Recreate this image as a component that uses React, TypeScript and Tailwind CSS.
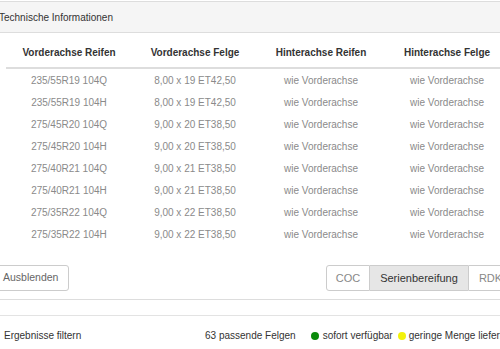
import React from 'react';

interface Row {
  reifen: string;
  felge: string;
}

const rows: Row[] = [
  { reifen: '235/55R19 104Q', felge: '8,00 x 19 ET42,50' },
  { reifen: '235/55R19 104H', felge: '8,00 x 19 ET42,50' },
  { reifen: '275/45R20 104Q', felge: '9,00 x 20 ET38,50' },
  { reifen: '275/45R20 104H', felge: '9,00 x 20 ET38,50' },
  { reifen: '275/40R21 104Q', felge: '9,00 x 21 ET38,50' },
  { reifen: '275/40R21 104H', felge: '9,00 x 21 ET38,50' },
  { reifen: '275/35R22 104Q', felge: '9,00 x 22 ET38,50' },
  { reifen: '275/35R22 104H', felge: '9,00 x 22 ET38,50' },
];

const headers = ['Vorderachse Reifen', 'Vorderachse Felge', 'Hinterachse Reifen', 'Hinterachse Felge'];

const App: React.FC = () => {
  return (
    <div
      className="w-[500px] h-[349px] overflow-hidden bg-white"
      style={{ fontFamily: '"Liberation Sans", Arial, Helvetica, sans-serif' }}
    >
      <div className="ml-[-14px] w-[545px] pt-[1px]">
        {/* Technische Informationen panel */}
        <div className="border border-[#dddddd] rounded-[3px] bg-white">
          <div className="bg-[#f5f5f5] border-b border-[#dddddd] h-[31px] px-[12px] flex items-center text-[10px] text-[#333333]">
            Technische Informationen
          </div>
          <div className="pl-[19px] pr-[20px] pb-[8px]">
            <div className="grid grid-cols-4 w-[504px] border-b-2 border-[#dddddd]">
              {headers.map(h => (
                <div
                  key={h}
                  className="text-center font-bold text-[10px] leading-[14px] text-[#333333] pt-[13px] pb-[7px]"
                >
                  {h}
                </div>
              ))}
            </div>
            <div className="w-[504px]">
              {rows.map(r => (
                <div key={r.reifen} className="grid grid-cols-4 h-[22px] items-center text-[10px] text-[#8a8a8a] text-center">
                  <div>{r.reifen}</div>
                  <div>{r.felge}</div>
                  <div>wie Vorderachse</div>
                  <div>wie Vorderachse</div>
                </div>
              ))}
            </div>
            <div className="flex items-center justify-between mt-[20px] ml-[-14px]">
              <button className="h-[26px] px-[10px] border border-[#cccccc] rounded-[3px] text-[10.5px] text-[#666666] bg-white">
                Ausblenden
              </button>
              <div className="flex mr-[-3px]">
                <button className="h-[26px] w-[44px] border border-[#cccccc] rounded-l-[3px] text-[11px] text-[#888888] bg-white">
                  COC
                </button>
                <button className="h-[26px] w-[98px] border-y border-[#cccccc] text-[11px] text-[#333333] bg-[#e6e6e6]">
                  Serienbereifung
                </button>
                <button className="h-[26px] w-[45px] border border-[#cccccc] rounded-r-[3px] text-[11px] text-[#888888] bg-white">
                  RDK
                </button>
              </div>
            </div>
          </div>
        </div>

        {/* Ergebnisse filtern bar */}
        <div className="mt-[15px] border-t border-[#e3e3e3] h-[40px] flex items-center text-[10px] text-[#333333] whitespace-nowrap">
          <div className="w-[219px] pl-[18px]">Ergebnisse filtern</div>
          <span>63 passende Felgen</span>
          <span className="ml-[15px] w-[8px] h-[8px] rounded-full bg-[#0a8a0a] inline-block"></span>
          <span className="ml-[4px]">sofort verfügbar</span>
          <span className="ml-[5px] w-[8px] h-[8px] rounded-full bg-[#f2f20a] inline-block"></span>
          <span className="ml-[3px]">geringe Menge lieferbar</span>
        </div>
      </div>
    </div>
  );
};

export default App;
